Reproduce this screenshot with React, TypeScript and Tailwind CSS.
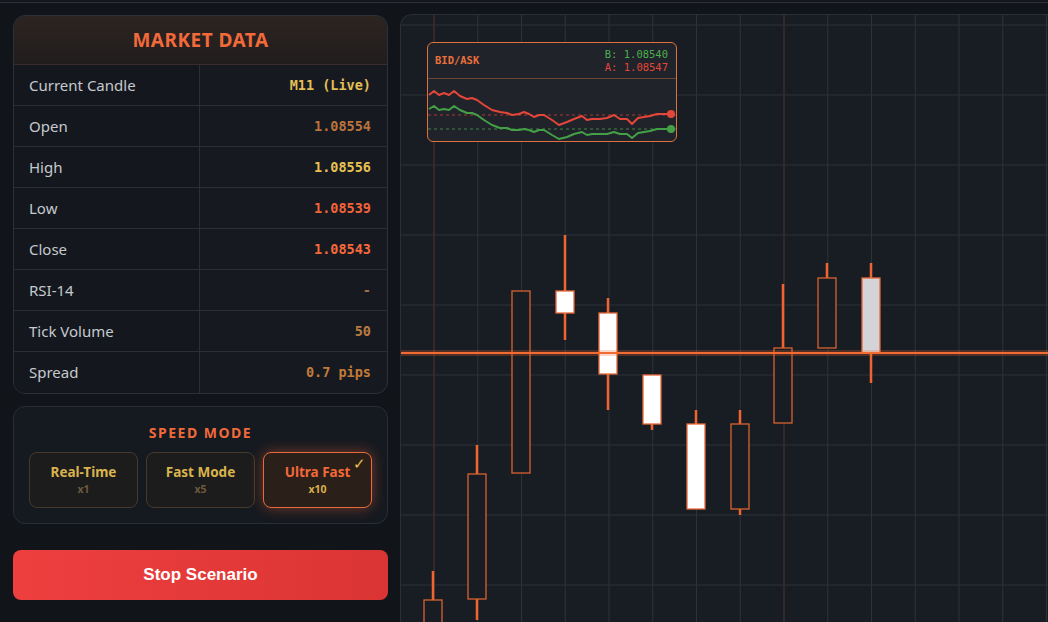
import React from "react";

const rows = [
  { label: "Current Candle", value: "M11 (Live)", color: "text-[#e3bf55]" },
  { label: "Open", value: "1.08554", color: "text-[#b9733c]" },
  { label: "High", value: "1.08556", color: "text-[#e6c052]" },
  { label: "Low", value: "1.08539", color: "text-[#f2623a]" },
  { label: "Close", value: "1.08543", color: "text-[#f4683a]" },
  { label: "RSI-14", value: "-", color: "text-[#a0704a]" },
  { label: "Tick Volume", value: "50", color: "text-[#b97a42]" },
  { label: "Spread", value: "0.7 pips", color: "text-[#c27a38]" },
];

const speeds = [
  { name: "Real-Time", mult: "x1", active: false },
  { name: "Fast Mode", mult: "x5", active: false },
  { name: "Ultra Fast", mult: "x10", active: true },
];

// candles in chart-local coordinates
const candles = [
  { x: 32, wt: 556, wb: 640, bt: 585, bb: 640, fill: "none" },
  { x: 76, wt: 430, wb: 605, bt: 459, bb: 584, fill: "none" },
  { x: 120, wt: 276, wb: 458, bt: 276, bb: 458, fill: "none" },
  { x: 164, wt: 220, wb: 325, bt: 276, bb: 298, fill: "#ffffff" },
  { x: 207, wt: 283, wb: 395, bt: 298, bb: 359, fill: "#ffffff" },
  { x: 251, wt: 360, wb: 415, bt: 360, bb: 409, fill: "#ffffff" },
  { x: 295, wt: 395, wb: 494, bt: 409, bb: 494, fill: "#ffffff" },
  { x: 339, wt: 395, wb: 500, bt: 409, bb: 494, fill: "none" },
  { x: 382, wt: 269, wb: 333, bt: 333, bb: 408, fill: "none" },
  { x: 426, wt: 248, wb: 263, bt: 263, bb: 333, fill: "none" },
  { x: 470, wt: 248, wb: 368, bt: 263, bb: 338, fill: "#d4d4d8" },
];

const gridX = Array.from({ length: 15 }, (_, i) => 33 + i * 43.75);
const gridY = Array.from({ length: 9 }, (_, i) => 10 + i * 70);

// bid/ask sparkline, page coords of the ask line
const askPts: [number, number][] = [
  [427, 93], [432, 89], [437, 93], [442, 91], [447, 93], [452, 89], [458, 94],
  [465, 97], [470, 96], [475, 98], [482, 103], [490, 108], [498, 110], [505, 111],
  [510, 113], [517, 112], [522, 110], [527, 112], [532, 115], [537, 113], [542, 113],
  [550, 118], [557, 123], [565, 120], [572, 117], [580, 114], [585, 118], [590, 117],
  [598, 117], [605, 116], [612, 113], [618, 117], [625, 117], [630, 122], [636, 116],
  [642, 115], [648, 114], [655, 112], [662, 112], [669, 112],
];
const bidOffsets = [14, 15, 15, 16, 15, 15, 14, 14, 15, 15, 15, 15, 16, 15, 15, 16, 17, 16, 15, 15, 15, 15, 14, 15, 15, 16, 15, 15, 15, 16, 17, 15, 15, 14, 15, 15, 15, 15, 15, 15];

const toLocal = (pts: [number, number][]) =>
  pts.map(([x, y]) => `${x - 426},${y - 77}`).join(" ");

function MarketData() {
  return (
    <div className="rounded-xl border border-[#2c3038] bg-[#161a20] overflow-hidden">
      <div className="h-[49px] flex items-center justify-center bg-gradient-to-b from-[#2c2421] to-[#211d1d] border-b border-[#3a2c28]">
        <h2 className="text-[19px] font-bold tracking-wide text-[#f26a3a]">MARKET DATA</h2>
      </div>
      {rows.map((r, i) => (
        <div
          key={r.label}
          className={`grid grid-cols-[186px_1fr] h-[41px] ${i < rows.length - 1 ? "border-b border-[#2a2e35]" : ""}`}
        >
          <div className="flex items-center pl-[15px] border-r border-[#2a2e35] bg-[#14181e] text-[15px] text-[#c6c9ce]">
            {r.label}
          </div>
          <div
            className={`flex items-center justify-end pr-[16px] font-bold text-[13.5px] ${r.color}`}
            style={{ fontFamily: '"DejaVu Sans Mono", monospace' }}
          >
            {r.value}
          </div>
        </div>
      ))}
    </div>
  );
}

function SpeedMode() {
  return (
    <div className="h-[118px] rounded-xl border border-[#2a2d33] bg-[#151920] px-[15px] pt-[19px]">
      <h3 className="text-center text-[14px] font-bold tracking-[1.5px] text-[#f0693a] leading-none">SPEED MODE</h3>
      <div className="mt-[12px] grid grid-cols-3 gap-[8px]">
        {speeds.map((s) =>
          s.active ? (
            <div
              key={s.name}
              className="relative h-[56px] rounded-lg border border-[#e8693a] bg-[#2a1f19] shadow-[0_0_14px_rgba(240,100,50,0.45)] flex flex-col items-center justify-center"
            >
              <span className="absolute right-[5px] top-[-1px] text-[15px] text-[#e8c14e]">✓</span>
              <span className="text-[13.5px] font-bold text-[#f3693a] leading-tight">{s.name}</span>
              <span className="text-[10.5px] font-bold text-[#d9b04a] leading-tight mt-[3px]">{s.mult}</span>
            </div>
          ) : (
            <div
              key={s.name}
              className="h-[56px] rounded-lg border border-[#47392a] bg-[#1c1c1d] flex flex-col items-center justify-center"
            >
              <span className="text-[13.5px] font-bold text-[#d9b44c] leading-tight">{s.name}</span>
              <span className="text-[10.5px] font-bold text-[#6e5a3e] leading-tight mt-[3px]">{s.mult}</span>
            </div>
          )
        )}
      </div>
    </div>
  );
}

function BidAsk() {
  const bidPts = askPts.map(([x, y], i) => [x, y + bidOffsets[i]] as [number, number]);
  return (
    <div className="absolute left-[26px] top-[27px] w-[250px] h-[100px] rounded-md border border-[#e2703c] bg-[#202329] overflow-hidden">
      <div
        className="h-[36px] flex items-center justify-between pl-[7px] pr-[8px] border-b border-[#6a4636]"
        style={{ fontFamily: '"DejaVu Sans Mono", monospace' }}
      >
        <span className="text-[10.5px] font-bold text-[#e8703d]">BID/ASK</span>
        <div className="flex flex-col items-end text-[10.5px] leading-[13px]">
          <span className="text-[#4caf50]">B: 1.08540</span>
          <span className="text-[#e5463a]">A: 1.08547</span>
        </div>
      </div>
      <svg width="250" height="64" className="block">
        <line x1="0" y1="36" x2="250" y2="36" stroke="#e5463a" strokeWidth="1" strokeDasharray="3 3" opacity="0.7" />
        <line x1="0" y1="50" x2="250" y2="50" stroke="#4caf50" strokeWidth="1" strokeDasharray="3 3" opacity="0.7" />
        <polyline points={toLocal(askPts)} fill="none" stroke="#e5463a" strokeWidth="2" strokeLinejoin="round" />
        <polyline points={toLocal(bidPts)} fill="none" stroke="#43a047" strokeWidth="2" strokeLinejoin="round" />
        <circle cx="243" cy="35" r="4" fill="#e5463a" />
        <circle cx="243" cy="50" r="4" fill="#43a047" />
      </svg>
    </div>
  );
}

function Chart() {
  return (
    <div className="relative flex-1 h-[640px] rounded-tl-xl border-l border-t border-[#2a2e36] bg-[#181c23] overflow-hidden">
      <svg width="660" height="640" className="absolute left-0 top-0">
        {gridX.map((x) => (
          <line key={`v${x}`} x1={x} y1="0" x2={x} y2="640" stroke="#2d3138" strokeWidth="1" />
        ))}
        {gridY.map((y) => (
          <line key={`h${y}`} x1="0" y1={y} x2="660" y2={y} stroke="#2d3138" strokeWidth="1" />
        ))}
        <line x1="33" y1="0" x2="33" y2="640" stroke="#4a2a22" strokeWidth="1" />
        <line x1="383" y1="0" x2="383" y2="640" stroke="#3f2c27" strokeWidth="1" />
        {candles.map((c) => (
          <g key={c.x}>
            <line x1={c.x} y1={c.wt} x2={c.x} y2={c.wb} stroke="#f0652f" strokeWidth="2.5" />
            <rect
              x={c.x - 9}
              y={c.bt}
              width="18"
              height={c.bb - c.bt}
              fill={c.fill === "none" ? "#181c23" : c.fill}
              stroke={c.fill === "none" ? "#d8642f" : "#e8693a"}
              strokeWidth="1.3"
            />
          </g>
        ))}
        <line x1="0" y1="338" x2="660" y2="338" stroke="#f06a30" strokeWidth="6" opacity="0.25" />
        <line x1="0" y1="338" x2="660" y2="338" stroke="#f26b32" strokeWidth="2" />
      </svg>
      <BidAsk />
    </div>
  );
}

export default function App() {
  return (
    <div
      className="w-[1048px] h-[622px] overflow-hidden bg-[#111419]"
      style={{ fontFamily: '"Noto Sans", "Open Sans", sans-serif' }}
    >
      <div className="h-[3px] border-b border-[#2b2f36] bg-[#14171d]" />
      <div className="flex gap-[12px] pl-[13px] pt-[11px]">
        <div className="w-[375px] shrink-0 flex flex-col">
          <div className="mt-[1px]">
            <MarketData />
          </div>
          <div className="mt-[12px]">
            <SpeedMode />
          </div>
          <button
            className="mt-[26px] h-[50px] rounded-lg bg-gradient-to-r from-[#ee3f3f] to-[#db3434] text-white text-[17px] font-bold"
            style={{ fontFamily: '"Liberation Sans", Arial, sans-serif' }}
          >
            Stop Scenario
          </button>
        </div>
        <Chart />
      </div>
    </div>
  );
}
